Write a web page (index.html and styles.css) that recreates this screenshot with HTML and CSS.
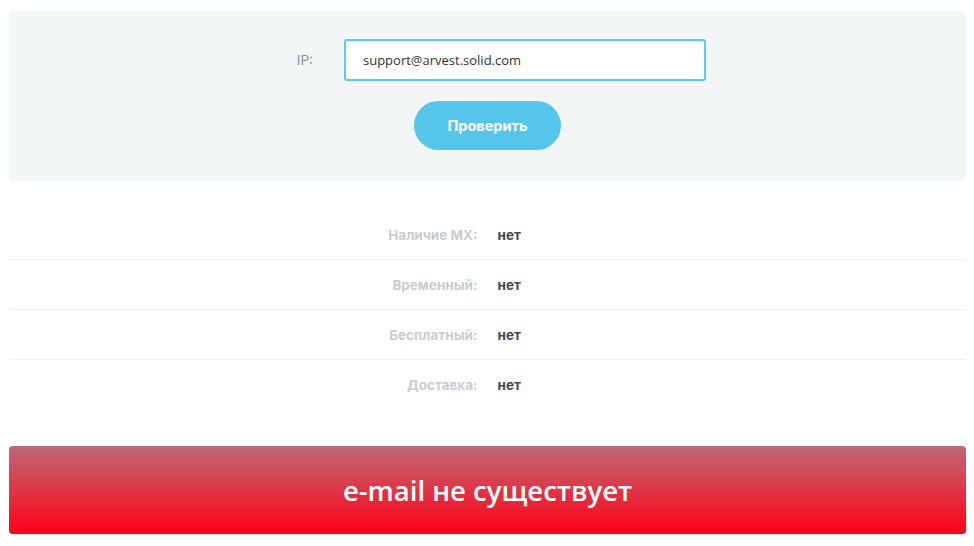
FILE: index.html
```html
<!DOCTYPE html>
<html lang="ru">
<head>
  <meta charset="UTF-8" />
  <meta name="viewport" content="width=device-width, initial-scale=1.0"/>
  <title>Проверка e-mail</title>
  <link rel="stylesheet" href="styles.css">
</head>
<body>

  <!-- CHECK FORM -->
  <div class="check-panel">
    <div class="check-row">
      <label class="check-label" for="addr">IP:</label>
      <input class="check-input" id="addr" type="text" value="support@arvest.solid.com">
    </div>
    <button class="check-btn">Проверить</button>
  </div>

  <!-- RESULTS -->
  <div class="results">
    <div class="result-row">
      <span class="result-name">Наличие MX:</span>
      <span class="result-value">нет</span>
    </div>
    <div class="result-row">
      <span class="result-name">Временный:</span>
      <span class="result-value">нет</span>
    </div>
    <div class="result-row">
      <span class="result-name">Бесплатный:</span>
      <span class="result-value">нет</span>
    </div>
    <div class="result-row">
      <span class="result-name">Доставка:</span>
      <span class="result-value">нет</span>
    </div>
  </div>

  <!-- VERDICT -->
  <div class="verdict">e-mail не существует</div>

</body>
</html>
```

FILE: styles.css
```css
/* Reset & Base */
* { box-sizing: border-box; margin: 0; padding: 0; }
body {
  font-family: Inter, "Noto Sans", sans-serif;
  background: #fff;
  color: #333;
  padding: 11px 8px 0 9px;
}

/* Check form */
.check-panel {
  background: #f2f6f7;
  border-radius: 4px;
  padding: 28px 0 31px;
  display: flex;
  flex-direction: column;
  align-items: center;
  gap: 20px;
}
.check-row {
  display: flex;
  align-items: center;
  gap: 31px;
}
.check-label {
  width: 44px;
  text-align: right;
  font-size: 13.5px;
  color: #8a8f95;
}
.check-input {
  width: 362px;
  height: 42px;
  padding: 0 17px;
  border: 2px solid #5ec8eb;
  border-radius: 3px;
  background: #fff;
  font-family: "Open Sans", sans-serif;
  font-size: 13px;
  color: #333;
  outline: none;
}
.check-btn {
  width: 147px;
  height: 49px;
  border: none;
  border-radius: 25px;
  background: #55c5ec;
  color: #fff;
  font-family: Inter, sans-serif;
  font-weight: 700;
  font-size: 14.5px;
  cursor: pointer;
}

/* Results */
.results {
  margin-top: 29px;
}
.result-row {
  display: grid;
  grid-template-columns: 1fr 1fr;
  column-gap: 20px;
  align-items: center;
  height: 50px;
  border-bottom: 1px solid #eeeff0;
  font-size: 13.5px;
  font-weight: 700;
}
.result-row:last-child {
  border-bottom: none;
}
.result-name {
  text-align: right;
  color: #c9ccd1;
}
.result-value {
  color: #45484c;
}

/* Verdict banner */
.verdict {
  margin-top: 36px;
  height: 88px;
  border-radius: 4px;
  background: linear-gradient(to bottom, #bd6a77, #ff0017);
  color: #fff;
  font-family: "Open Sans", sans-serif;
  font-weight: 600;
  font-size: 27.5px;
  display: flex;
  align-items: center;
  justify-content: center;
}
```
